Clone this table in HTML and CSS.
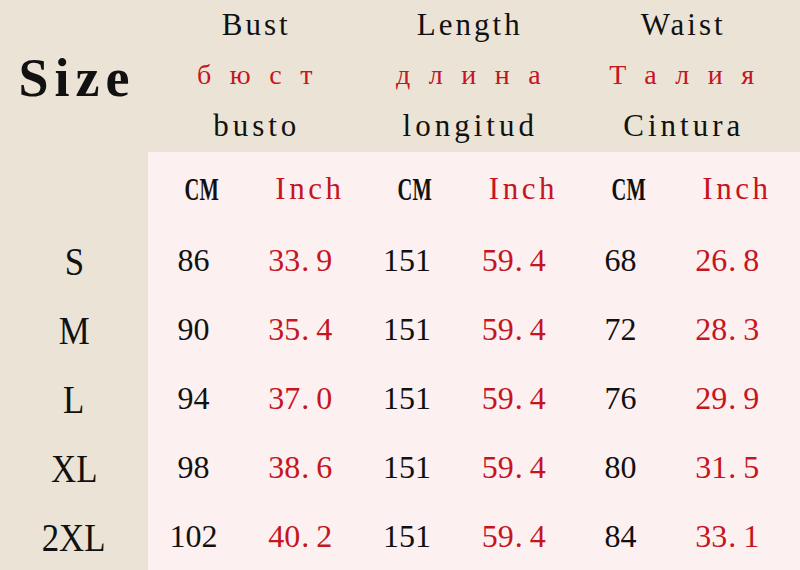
FILE: index.html
```html
<!DOCTYPE html>
<html lang="en">
<head>
<meta charset="utf-8">
<title>Size chart</title>
<link rel="stylesheet" href="styles.css">
</head>
<body>
<div class="chart">
  <header class="head">
    <div class="size-title">Size</div>
    <div class="group">
      <div class="en">Bust</div>
      <div class="ru">бюст</div>
      <div class="es">busto</div>
    </div>
    <div class="group">
      <div class="en">Length</div>
      <div class="ru">длина</div>
      <div class="es">longitud</div>
    </div>
    <div class="group">
      <div class="en">Waist</div>
      <div class="ru">Талия</div>
      <div class="es">Cintura</div>
    </div>
  </header>
  <section class="body">
    <div class="sizes">
      <div class="size-cell"></div>
      <div class="size-cell"><span>S</span></div>
      <div class="size-cell"><span>M</span></div>
      <div class="size-cell"><span>L</span></div>
      <div class="size-cell"><span>XL</span></div>
      <div class="size-cell"><span>2XL</span></div>
    </div>
    <div class="panel">
      <div class="unit"><span class="cm">CM</span></div><div class="unit inch">Inch</div>
      <div class="unit"><span class="cm">CM</span></div><div class="unit inch">Inch</div>
      <div class="unit"><span class="cm">CM</span></div><div class="unit inch">Inch</div>

      <div class="val">86</div><div class="val red">33<span class="dot">.</span>9</div>
      <div class="val">151</div><div class="val red">59<span class="dot">.</span>4</div>
      <div class="val">68</div><div class="val red">26<span class="dot">.</span>8</div>

      <div class="val">90</div><div class="val red">35<span class="dot">.</span>4</div>
      <div class="val">151</div><div class="val red">59<span class="dot">.</span>4</div>
      <div class="val">72</div><div class="val red">28<span class="dot">.</span>3</div>

      <div class="val">94</div><div class="val red">37<span class="dot">.</span>0</div>
      <div class="val">151</div><div class="val red">59<span class="dot">.</span>4</div>
      <div class="val">76</div><div class="val red">29<span class="dot">.</span>9</div>

      <div class="val">98</div><div class="val red">38<span class="dot">.</span>6</div>
      <div class="val">151</div><div class="val red">59<span class="dot">.</span>4</div>
      <div class="val">80</div><div class="val red">31<span class="dot">.</span>5</div>

      <div class="val">102</div><div class="val red">40<span class="dot">.</span>2</div>
      <div class="val">151</div><div class="val red">59<span class="dot">.</span>4</div>
      <div class="val">84</div><div class="val red">33<span class="dot">.</span>1</div>
    </div>
  </section>
</div>
</body>
</html>
```
FILE: styles.css
```css
html, body {
  margin: 0;
  padding: 0;
}
body {
  background: #ebe4d6;
  font-family: "Liberation Serif", "Times New Roman", serif;
  color: #111;
}
.chart {
  width: 800px;
  height: 570px;
  overflow: hidden;
}
.head {
  display: grid;
  grid-template-columns: 148px repeat(3, 213.5px);
  height: 152px;
}
.size-title {
  display: flex;
  align-items: center;
  justify-content: center;
  font-weight: bold;
  font-size: 54px;
  letter-spacing: 6px;
  padding: 4px 0 0 6px;
}
.group {
  display: grid;
  grid-template-rows: 50px 50px 52px;
  text-align: center;
}
.en {
  font-size: 31px;
  line-height: 50px;
  letter-spacing: 3px;
  text-indent: 3px;
}
.ru {
  font-size: 28px;
  line-height: 50px;
  color: #c5151f;
  letter-spacing: 18.5px;
  text-indent: 18.5px;
}
.es {
  font-size: 31px;
  line-height: 52px;
  letter-spacing: 4px;
  text-indent: 4px;
}
.body {
  display: flex;
  height: 418px;
}
.sizes {
  width: 148px;
  flex: none;
  display: grid;
  grid-template-rows: 74px repeat(5, 69px);
}
.size-cell {
  display: flex;
  align-items: center;
  justify-content: center;
  font-size: 41px;
}
.size-cell span {
  display: inline-block;
  transform: scaleX(0.85);
}
.panel {
  flex: 1;
  background: #fcf0f0;
  display: grid;
  grid-template-columns: repeat(6, 106.75px);
  grid-template-rows: 74px repeat(5, 69px);
  align-items: center;
}
.unit {
  text-align: center;
  font-size: 31px;
}
.cm {
  display: inline-block;
  font-weight: bold;
  font-size: 32px;
  transform: scaleX(0.64);
}
.inch {
  color: #c5151f;
  letter-spacing: 3.5px;
  text-indent: 3.5px;
}
.val {
  text-align: center;
  font-size: 32px;
  padding-right: 16px;
}
.red {
  color: #c5151f;
}
.dot {
  display: inline-block;
  width: 0.5em;
  text-align: left;
  padding-left: 1px;
  box-sizing: border-box;
}
```
